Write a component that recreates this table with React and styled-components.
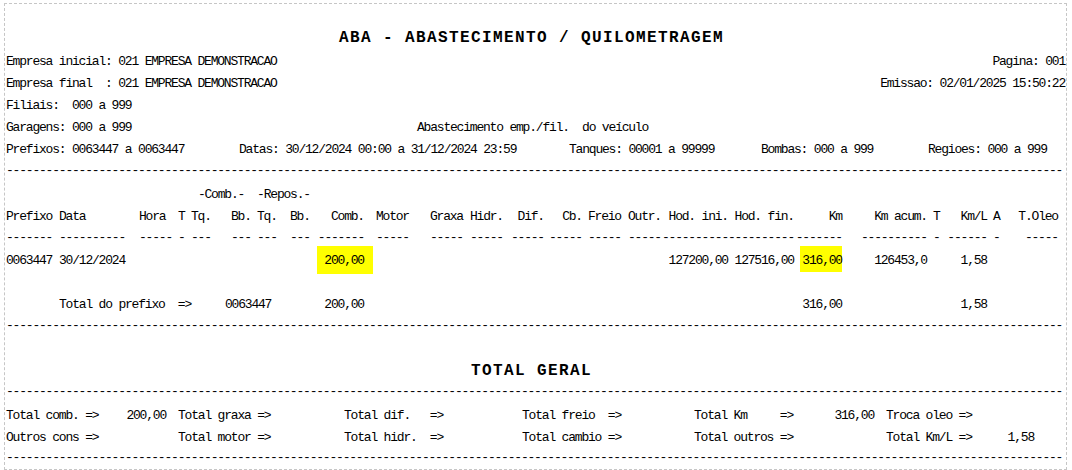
import React from 'react';
import styled, { createGlobalStyle } from 'styled-components';

const GlobalStyle = createGlobalStyle`
  html, body { margin: 0; padding: 0; background: #fff; overflow: hidden; }
  body { font-family: "Liberation Mono", "DejaVu Sans Mono", monospace; color: #000; }
`;

const ORIGIN = 6;

// screen-space boxes of the table columns: start, end, alignment
const COLS = [
  { s: 6, e: 52.2, a: 'l' },      // Prefixo
  { s: 59, e: 125, a: 'l' },      // Data
  { s: 139, e: 172, a: 'l' },     // Hora
  { s: 178, e: 185, a: 'l' },     // T
  { s: 191, e: 211, a: 'l' },     // Tq.
  { s: 231, e: 251, a: 'l' },     // Bb.
  { s: 257, e: 277, a: 'l' },     // Tq.
  { s: 290, e: 310, a: 'l' },     // Bb.
  { s: 317.8, e: 364, a: 'r' },   // Comb.
  { s: 376, e: 409, a: 'l' },     // Motor
  { s: 430, e: 463, a: 'l' },     // Graxa
  { s: 470, e: 503, a: 'l' },     // Hidr.
  { s: 511, e: 544, a: 'r' },     // Dif.
  { s: 549, e: 582, a: 'r' },     // Cb.
  { s: 588, e: 621, a: 'l' },     // Freio
  { s: 628, e: 661, a: 'l' },     // Outr.
  { s: 662, e: 728, a: 'r' },     // Hod. ini.
  { s: 728, e: 794, a: 'r' },     // Hod. fin.
  { s: 795.8, e: 842, a: 'r' },   // Km
  { s: 861, e: 927, a: 'r' },     // Km acum.
  { s: 933, e: 940, a: 'l' },     // T
  { s: 947.4, e: 987, a: 'r' },   // Km/L
  { s: 993, e: 1000, a: 'l' },    // A
  { s: 1018, e: 1058, a: 'r' },   // T.Oleo
];

const TABLE_TEMPLATE = (() => {
  let prev = ORIGIN;
  const t = [];
  COLS.forEach((c) => {
    t.push(`${(c.s - prev).toFixed(1)}px`, `${(c.e - c.s).toFixed(1)}px`);
    prev = c.e;
  });
  return t.join(' ');
})();

const HEADERS = ['Prefixo', 'Data', 'Hora', 'T', 'Tq.', 'Bb.', 'Tq.', 'Bb.', 'Comb.', 'Motor', 'Graxa', 'Hidr.', 'Dif.', 'Cb.', 'Freio', 'Outr.', 'Hod. ini.', 'Hod. fin.', 'Km', 'Km acum.', 'T', 'Km/L', 'A', 'T.Oleo'];
const DASHES = [7, 10, 5, 1, 3, 3, 3, 3, 7, 5, 5, 5, 5, 5, 5, 5, 10, 10, 7, 10, 1, 6, 1, 5];

const Page = styled.div`
  box-sizing: border-box;
  width: 1063px;
  margin: 3px 0 0 4px;
  padding: 22px 1px 0 1px;
  border: 1px dashed #c6c6c6;
  font-family: "Liberation Mono", "DejaVu Sans Mono", monospace;
  font-size: 13px;
  letter-spacing: -1.2px;
  color: #000;
`;

const Title = styled.div`
  height: ${(p) => p.$h}px;
  line-height: ${(p) => p.$h + 2}px;
  text-align: center;
  padding-right: 8px;
  font-weight: bold;
  font-size: 16px;
  letter-spacing: 1.4px;
  white-space: pre;
`;

/* text rows: 22px pitch, glyphs sit 2px lower than a centred line box */
const Line = styled.div`
  height: 22px;
  line-height: ${(p) => p.$lh ?? 26}px;
  white-space: pre;
`;

const SplitLine = styled(Line)`
  display: flex;
  justify-content: space-between;
`;

const FieldsLine = styled(Line)`
  display: grid;
  grid-template-columns: ${(p) => p.$cols};
`;

const Rule = styled.div`
  height: ${(p) => p.$h}px;
  line-height: ${(p) => p.$h}px;
  white-space: pre;
  overflow: hidden;
`;

const TableRow = styled(Line)`
  display: grid;
  grid-template-columns: ${TABLE_TEMPLATE};
`;

const Cell = styled.span`
  grid-row: 1;
  grid-column: ${(p) => (p.$to != null ? `${2 * p.$col + 2} / ${2 * p.$to + 3}` : `${2 * p.$col + 2}`)};
  text-align: ${(p) => (p.$align === 'r' ? 'right' : p.$align === 'c' ? 'center' : 'left')};
  white-space: pre;
  min-width: 0;
`;

const Mark = styled.span`
  display: inline-block;
  line-height: 22px;
  background: #ffff00;
  padding: ${(p) => p.$pad};
  margin: ${(p) => p.$pad.split(' ').map((v) => (v === '0' ? '0' : `-${v}`)).join(' ')};
`;

const InlineGroup = styled.span`
  display: flex;
`;

const FixedLabel = styled.span`
  width: ${(p) => p.$w}px;
  flex: none;
  white-space: pre;
`;

const TotalsLine = styled(Line)`
  display: grid;
  grid-template-columns: 172px 166px 178px 172px 192px 160px;
`;

const TotalCell = styled.span`
  display: flex;
  justify-content: space-between;
  padding-right: 12px;
  white-space: pre;
`;

const RULE = '-'.repeat(160);

const cell = (i, content, extra = {}) => (
  <Cell key={i} $col={i} $align={COLS[i].a} {...extra}>
    {content}
  </Cell>
);

const TOTALS = [
  [
    ['Total comb. =>', '200,00'],
    ['Total graxa =>', ''],
    ['Total dif.   =>', ''],
    ['Total freio  =>', ''],
    ['Total Km     =>', '316,00'],
    ['Troca oleo =>', ''],
  ],
  [
    ['Outros cons =>', ''],
    ['Total motor =>', ''],
    ['Total hidr.  =>', ''],
    ['Total cambio =>', ''],
    ['Total outros =>', ''],
    ['Total Km/L =>', '1,58'],
  ],
];

export default function App() {
  return (
    <>
      <GlobalStyle />
      <Page>
        <Title $h={23}>ABA - ABASTECIMENTO / QUILOMETRAGEM</Title>
        <SplitLine>
          <span>Empresa inicial: 021 EMPRESA DEMONSTRACAO</span>
          <span>Pagina: 001</span>
        </SplitLine>
        <SplitLine>
          <span>Empresa final  : 021 EMPRESA DEMONSTRACAO</span>
          <span>Emissao: 02/01/2025 15:50:22</span>
        </SplitLine>
        <Line>Filiais:  000 a 999</Line>
        <FieldsLine $cols="411px auto">
          <span>Garagens: 000 a 999</span>
          <span>Abastecimento emp./fil.  do veículo</span>
        </FieldsLine>
        <FieldsLine $cols="233px 330px 192px 167px auto">
          <span>Prefixos: 0063447 a 0063447</span>
          <span>Datas: 30/12/2024 00:00 a 31/12/2024 23:59</span>
          <span>Tanques: 00001 a 99999</span>
          <span>Bombas: 000 a 999</span>
          <span>Regioes: 000 a 999</span>
        </FieldsLine>
        <Rule $h={23}>{RULE}</Rule>

        <TableRow>
          <Cell $col={4} $to={5} $align="c">-Comb.-</Cell>
          <Cell $col={6} $to={7} $align="c">-Repos.-</Cell>
        </TableRow>
        <TableRow>{HEADERS.map((h, i) => cell(i, h))}</TableRow>
        <TableRow $lh={24}>{DASHES.map((n, i) => cell(i, '-'.repeat(n)))}</TableRow>
        <TableRow>
          {cell(0, '0063447')}
          {cell(1, '30/12/2024')}
          {cell(8, <Mark $pad="4px 9px 2px 7px">200,00</Mark>)}
          {cell(16, '127200,00')}
          {cell(17, '127516,00')}
          {cell(18, <Mark $pad="4px 0 0 2px">316,00</Mark>)}
          {cell(19, '126453,0')}
          {cell(21, '1,58')}
        </TableRow>
        <Line />
        <TableRow>
          <Cell $col={1} $to={7} $align="l">
            <InlineGroup>
              <FixedLabel $w={166}>Total do prefixo  =&gt;</FixedLabel>
              <span>0063447</span>
            </InlineGroup>
          </Cell>
          {cell(8, '200,00')}
          {cell(18, '316,00')}
          {cell(21, '1,58')}
        </TableRow>
        <Rule $h={23}>{RULE}</Rule>

        <Line />
        <Title $h={22}>TOTAL GERAL</Title>
        <Rule $h={22}>{RULE}</Rule>
        {TOTALS.map((row, r) => (
          <TotalsLine key={r}>
            {row.map(([label, value], i) => (
              <TotalCell key={i}>
                <span>{label}</span>
                <span>{value}</span>
              </TotalCell>
            ))}
          </TotalsLine>
        ))}
        <Rule $h={22}>{RULE}</Rule>
      </Page>
    </>
  );
}
